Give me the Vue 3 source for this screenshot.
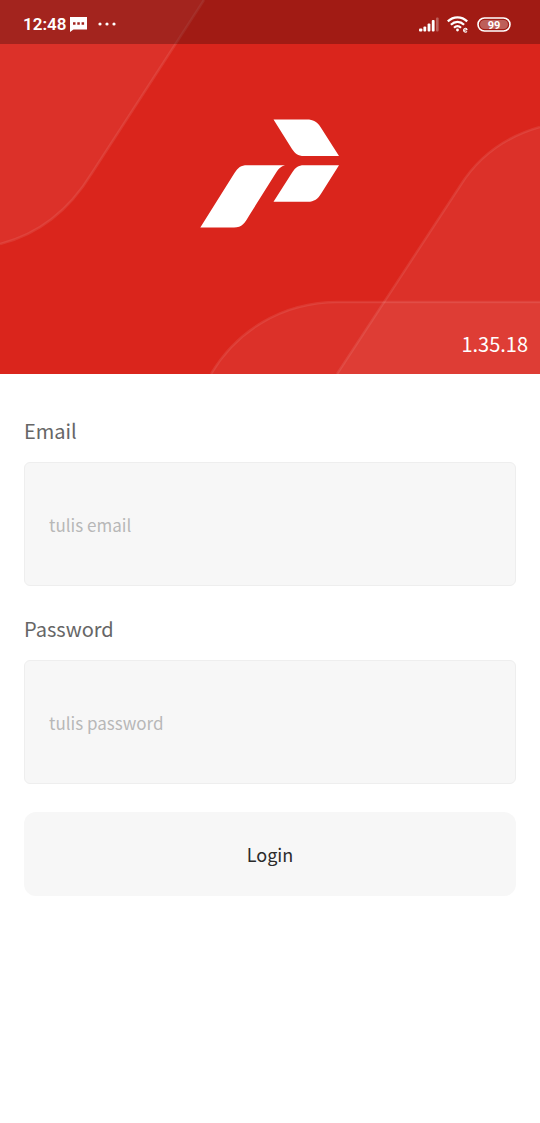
<script setup>
import { ref } from 'vue'

const email = ref('')
const password = ref('')
</script>

<template>
  <main class="screen">
    <header class="hero">
      <svg class="pattern" viewBox="0 0 540 374" preserveAspectRatio="none" aria-hidden="true">
        <g fill="#fff" fill-opacity="0.06">
          <path d="M0 0H204L92 173C70 209 40 234 0 244Z" />
          <path d="M337 374L460 186C480 154 508 136 540 127V374Z" />
          <path d="M211 374C235 333 280 302 338 302H540V374Z" />
        </g>
        <g fill="none" stroke="#fff" stroke-opacity="0.09" stroke-width="2.5">
          <path d="M204 0L92 173C70 209 40 234 0 244" />
          <path d="M337 374L460 186C480 154 508 136 540 127" />
          <path d="M211 374C235 333 280 302 338 302H540" />
        </g>
      </svg>

      <div class="status">
        <div class="group">
          <span class="clock">12:48</span>
          <svg width="17" height="15" viewBox="0 0 17 15" aria-hidden="true">
            <path fill="#fff" fill-rule="evenodd" d="M0 0H17V12.5H3.5L0 15ZM3 5.2V7.8H5.5V5.2ZM7.3 5.2V7.8H9.8V5.2ZM11.6 5.2V7.8H14.1V5.2Z" />
          </svg>
          <svg class="dots" width="18" height="4" viewBox="0 0 18 4" fill="#fff" aria-hidden="true">
            <circle cx="2" cy="2" r="1.6" />
            <circle cx="9" cy="2" r="1.6" />
            <circle cx="16" cy="2" r="1.6" />
          </svg>
        </div>
        <div class="group right">
          <svg width="20" height="15" viewBox="0 0 20 15" fill="#fff" aria-hidden="true">
            <rect x="0" y="11.5" width="3.4" height="3" rx="1" />
            <rect x="4.4" y="9.5" width="2.8" height="5" rx="1" />
            <rect x="8.6" y="6.5" width="2.8" height="8" rx="1" />
            <rect x="12.8" y="3" width="2.8" height="11.500" rx="1" />
            <rect x="17" y="0.5" width="2.6" height="14" rx="1" opacity="0.3" />
          </svg>
          <svg class="wifi" width="22" height="17" viewBox="0 0 22 17" fill="none" stroke="#fff" aria-hidden="true">
            <path stroke-width="2.2" d="M0.8 5.4C6.3 -0.1 14.7 -0.1 20.2 5.4M3.9 8.7C7.8 4.8 13.2 4.8 17.1 8.7M7 11.8C9.2 9.7 11.8 9.7 14 11.8" />
            <circle cx="10.5" cy="14" r="1.4" fill="#fff" stroke="none" />
            <path stroke-width="1.1" d="M16.7 14.6L20 13.5C19.8 11.7 16.8 11.8 16.6 14C16.5 16.2 18.9 16.7 20 15.4" />
          </svg>
          <svg class="battery" width="34" height="15" viewBox="0 0 34 15" aria-hidden="true">
            <rect x="1" y="1" width="32" height="13" rx="6.5" fill="none" stroke="#fff" stroke-width="1.6" />
            <rect x="3" y="3" width="28" height="9" rx="4.5" fill="#fff" fill-opacity="0.3" />
            <text x="17" y="11.5" text-anchor="middle" class="level">99</text>
          </svg>
        </div>
      </div>

      <svg class="logo" width="140" height="109" viewBox="0 0 140 109" fill="#fff" role="img" aria-label="Logo">
        <path d="M73.5 0.5H107C113 0.5 117 2.5 120.5 8L139 37H104C98 37 95 34.5 92 30Z" />
        <path d="M139 46.2L121.5 74C118 80 114 82.8 108 82.8H73.5L92.5 53C95.5 48.5 98 46.2 104 46.2Z" />
        <path d="M0.3 108.5L34.5 54C38 48.5 41 46.2 47 46.2H85C81 47.5 79 49 76.5 53L49.5 96C45 104 42 108.5 34 108.5Z" />
      </svg>

      <p class="version">1.35.18</p>
    </header>

    <form class="form" @submit.prevent>
      <div class="field">
        <label for="email">Email</label>
        <input id="email" v-model="email" type="email" placeholder="tulis email" />
      </div>
      <div class="field">
        <label for="password">Password</label>
        <input id="password" v-model="password" type="password" placeholder="tulis password" />
      </div>
      <button type="submit">Login</button>
    </form>
  </main>
</template>

<style>
body {
  margin: 0;
  background: #fff;
}
</style>

<style scoped>
.screen {
  min-height: 100vh;
  font-family: "Noto Sans CJK SC", "Noto Sans", sans-serif;
}

.hero {
  position: relative;
  display: flex;
  flex-direction: column;
  align-items: center;
  background: #da251c;
  color: #fff;
}

.pattern {
  position: absolute;
  inset: 0;
  width: 100%;
  height: 100%;
}

.status {
  position: relative;
  box-sizing: border-box;
  width: 100%;
  height: 44px;
  padding: 4px 29px 0 23px;
  display: flex;
  justify-content: space-between;
  align-items: center;
  background: rgba(0, 0, 0, 0.26);
}

.group {
  display: flex;
  align-items: center;
  gap: 4px;
}

.right {
  gap: 8px;
}

.clock {
  font: 600 17px/20px Roboto, sans-serif;
}

.dots {
  margin-left: 7px;
}

.level {
  fill: #fff;
  font: 700 11px Roboto, sans-serif;
}

.logo {
  position: relative;
  margin-top: 75px;
}

.version {
  position: relative;
  align-self: flex-end;
  margin: 102px 12px 16px;
  font-size: 20px;
  line-height: 28px;
}

.form {
  display: flex;
  flex-direction: column;
  gap: 28px;
  padding: 42px 24px;
}

.field {
  display: flex;
  flex-direction: column;
  gap: 16px;
}

label {
  font-size: 20px;
  line-height: 30px;
  color: #666;
}

input {
  box-sizing: border-box;
  width: 100%;
  height: 124px;
  padding: 0 24px;
  border: 1px solid #eee;
  border-radius: 6px;
  background: #f7f7f7;
  color: #333;
  font-family: inherit;
  font-size: 17px;
}

input::placeholder {
  color: #b8b8b8;
  opacity: 1;
}

button {
  height: 84px;
  border: 0;
  border-radius: 12px;
  background: #f7f7f7;
  color: #2b2b2b;
  font-family: inherit;
  font-size: 18px;
}
</style>
